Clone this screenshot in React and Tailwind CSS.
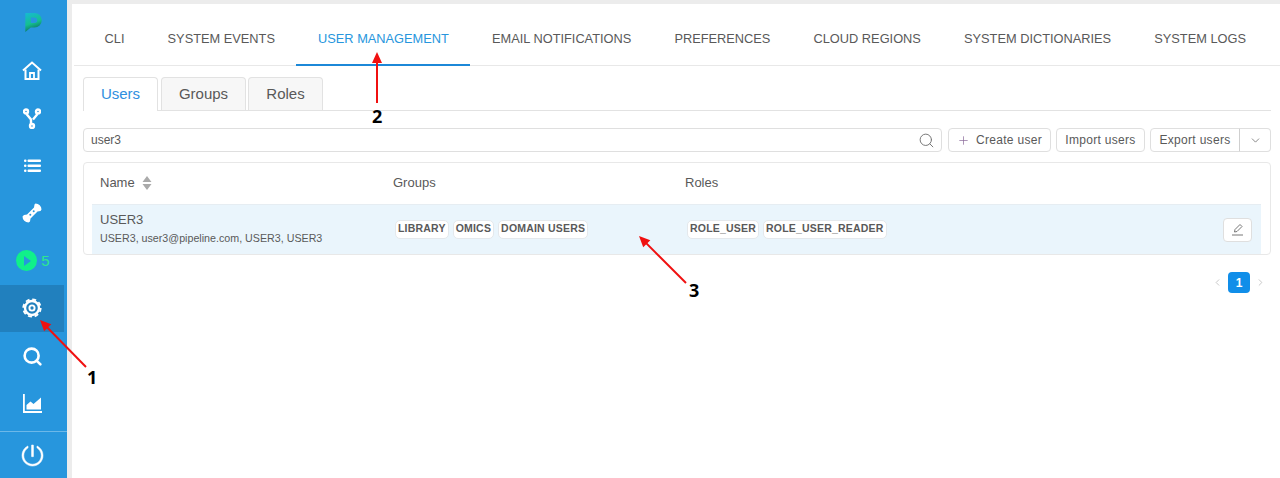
import React from 'react';
import { Search, ChevronDown, ChevronLeft, ChevronRight, Plus } from 'lucide-react';
import { AiOutlinePoweroff } from 'react-icons/ai';

const topTabs = ['CLI', 'SYSTEM EVENTS', 'USER MANAGEMENT', 'EMAIL NOTIFICATIONS', 'PREFERENCES', 'CLOUD REGIONS', 'SYSTEM DICTIONARIES', 'SYSTEM LOGS'];

function Tag({ children }) {
  return (
    <span className="h-[19px] px-[2px] flex items-center bg-white border border-[#e4e8ec] rounded-[5px] text-[10.5px] font-bold text-[#595959] tracking-[0.2px] whitespace-nowrap">
      {children}
    </span>
  );
}

function Logo() {
  return (
    <svg width="18" height="21" viewBox="0 0 19 23">
      <defs>
        <linearGradient id="logoGrad" x1="0" y1="0" x2="0.3" y2="1">
          <stop offset="0" stopColor="#17b9d6" />
          <stop offset="0.6" stopColor="#14c08f" />
          <stop offset="1" stopColor="#0d6f63" />
        </linearGradient>
      </defs>
      <path fillRule="evenodd" fill="url(#logoGrad)" d="M0 1h10a8 8 0 0 1 0 16H6l-6 5zM6 6v6h4a3 3 0 0 0 0-6z" />
    </svg>
  );
}

function HomeIcon() {
  return (
    <svg width="20" height="20" viewBox="0 0 20 20" fill="none" stroke="white" strokeWidth="2">
      <path d="M1 9.500L10 1.500l9 8" />
      <path d="M3.500 8.500V18h13V8.500" />
      <path d="M8 18v-6h4v6" strokeWidth="1.800" />
    </svg>
  );
}

function ForkIcon() {
  return (
    <svg width="18" height="21" viewBox="0 0 18 21" fill="none" stroke="white" strokeWidth="2.400">
      <circle cx="3" cy="3.500" r="2" />
      <circle cx="15" cy="3.500" r="2" />
      <circle cx="9" cy="18" r="2" />
      <path d="M3.500 6l4.500 5.500V16M14.500 6L10 11.500" />
    </svg>
  );
}

function ListIcon() {
  return (
    <svg width="17" height="14" viewBox="0 0 17 14" fill="white">
      <rect x="0" y="0.500" width="2.500" height="2.500" rx="1" />
      <rect x="0" y="5.500" width="2.500" height="2.500" rx="1" />
      <rect x="0" y="10.500" width="2.500" height="2.500" rx="1" />
      <rect x="3.500" y="0.500" width="13.500" height="2.500" rx="1" />
      <rect x="3.500" y="5.500" width="13.500" height="2.500" rx="1" />
      <rect x="3.500" y="10.500" width="13.500" height="2.500" rx="1" />
    </svg>
  );
}

function ToolIcon() {
  return (
    <svg width="20" height="20" viewBox="0 0 20 20" fill="white">
      <path d="M13.500 0.500a6 6 0 0 1 6 6l-1 1.500-3 .5-3.500 3.500-3.500 3.500-.5 3-1.500 1a6 6 0 0 1-6-6l1.500-1.500 3-.5L12 4.500l.5-3z" />
      <circle cx="8.300" cy="11.700" r="1" fill="#2796dd" />
      <circle cx="11.700" cy="8.300" r="1" fill="#2796dd" />
    </svg>
  );
}

function GearIcon() {
  return (
    <svg width="20" height="20" viewBox="0 0 20 20" fill="none" stroke="white">
      <circle cx="10" cy="10" r="7" strokeWidth="2.400" />
      <circle cx="10" cy="10" r="8.700" strokeWidth="1.800" strokeDasharray="4 2.830" />
      <circle cx="10" cy="10" r="2.600" strokeWidth="1.900" />
    </svg>
  );
}

function ChartIcon() {
  return (
    <svg width="19" height="19" viewBox="0 0 19 19" fill="white">
      <path d="M0 0h1.800v17H19v2H0z" />
      <path d="M3.500 15.500v-4.500l4-3.500 3 2.500 3.500-3 4-3.500v12z" />
    </svg>
  );
}

function SideItem({ children, active }) {
  return (
    <div className={`h-[47.5px] w-[64px] flex items-center justify-center ${active ? 'bg-[#2180be]' : ''}`}>
      {children}
    </div>
  );
}

function Sidebar() {
  return (
    <aside className="w-[67px] h-[478px] shrink-0 bg-[#2796dd] flex flex-col">
      <div className="h-[47px] w-[64px] flex items-center justify-center pb-[2px] pl-[3px]">
        <Logo />
      </div>
      <SideItem><HomeIcon /></SideItem>
      <SideItem><ForkIcon /></SideItem>
      <SideItem><ListIcon /></SideItem>
      <SideItem><ToolIcon /></SideItem>
      <SideItem>
        <span className="flex items-center gap-[4px] pl-[2px]">
          <span className="w-[21px] h-[21px] rounded-full bg-[#10f08a] flex items-center justify-center">
            <svg width="8" height="10" viewBox="0 0 8 10"><path d="M1 0l7 5-7 5z" fill="#2796dd" /></svg>
          </span>
          <span className="text-[15px] text-[#2ee88f]">5</span>
        </span>
      </SideItem>
      <SideItem active><GearIcon /></SideItem>
      <SideItem><Search size={21} color="white" strokeWidth={3} className="mt-[2px]" /></SideItem>
      <SideItem><ChartIcon /></SideItem>
      <div className="mt-[4px] border-t border-[#6cb8e8] flex-1 flex items-center justify-center pr-[2px]">
        <AiOutlinePoweroff size={25} color="white" stroke="white" strokeWidth={20} />
      </div>
    </aside>
  );
}

function TopTabs() {
  return (
    <div className="h-[62px] ml-[2px] flex pl-[9px] border-b border-[#e8e8e8]">
      {topTabs.map((t) => (
        <div
          key={t}
          className={`h-[62px] px-[21.55px] flex items-center whitespace-nowrap text-[12.8px] pt-[10px] border-b-2 ${t === 'USER MANAGEMENT' ? 'text-[#2796dd] border-[#1c88d8]' : 'text-[#595959] border-transparent'}`}
        >
          {t}
        </div>
      ))}
    </div>
  );
}

function SubTabs() {
  return (
    <div className="mt-[11px] ml-[11px] mr-[9px] h-[34px] flex border-b border-[#e2e2e2]">
      <div className="w-[75px] h-[34px] mr-[3px] flex items-center justify-center bg-white border border-b-0 border-[#e2e2e2] rounded-t-[4px] text-[15px] text-[#2f8fe0]">Users</div>
      <div className="w-[85px] h-[33px] mr-[2px] flex items-center justify-center bg-[#f7f7f7] border border-b-0 border-[#e2e2e2] rounded-t-[4px] text-[15px] text-[#595959]">Groups</div>
      <div className="w-[75px] h-[33px] flex items-center justify-center bg-[#f7f7f7] border border-b-0 border-[#e2e2e2] rounded-t-[4px] text-[15px] text-[#595959]">Roles</div>
    </div>
  );
}

function Toolbar() {
  const btn = 'h-[24px] flex items-center justify-center bg-white border border-[#dfdfdf] text-[12px] tracking-[0.3px] text-[#595959]';
  return (
    <div className="mt-[17px] ml-[11px] mr-[9px] flex">
      <div className="w-[859px] h-[24px] flex items-center justify-between border border-[#dfdfdf] rounded-[4px] pl-[7px] pr-[6px] text-[12px] text-[#595959]">
        <span>user3</span>
        <Search size={17} color="#777" strokeWidth={1.4} />
      </div>
      <div className={`${btn} ml-[6px] w-[103px] rounded-[4px] gap-[6px]`}>
        <Plus size={13} color="#8a6a9a" strokeWidth={1.3} />
        <span>Create user</span>
      </div>
      <div className={`${btn} ml-[5px] w-[89px] rounded-[4px]`}>Import users</div>
      <div className={`${btn} ml-[5px] w-[90px] rounded-l-[4px]`}>Export users</div>
      <div className={`${btn} w-[32px] border-l-[#cfcfcf] -ml-[1px] rounded-r-[4px]`}>
        <ChevronDown size={13} color="#666" strokeWidth={1.4} />
      </div>
    </div>
  );
}

function UserTable() {
  return (
    <div className="mt-[10px] ml-[11px] mr-[9px] h-[93px] border border-[#e8e8e8] rounded-[4px] pl-[8px] pr-[9px] text-[#595959]">
      <div className="h-[41px] flex items-center text-[13px] pl-[8px] pb-[1px]">
        <div className="w-[293px] flex items-center gap-[7px]">
          Name
          <svg width="10" height="14" viewBox="0 0 10 14" fill="#aaa">
            <path d="M5 0l4.500 6h-9zM5 14l-4.500-6h9z" />
          </svg>
        </div>
        <div className="w-[292px]">Groups</div>
        <div>Roles</div>
      </div>
      <div className="h-[50px] bg-[#eaf5fc] border-t border-[#e6edf2] flex items-center pl-[8px] pr-[9px]">
        <div className="w-[295px] pb-[1px]">
          <div className="text-[13px] leading-[16px] -mt-[1px]">USER3</div>
          <div className="text-[10.7px] leading-[14px] mt-[3px] whitespace-nowrap">USER3, user3@pipeline.com, USER3, USER3</div>
        </div>
        <div className="w-[292px] flex gap-[4px] pb-[1px]">
          <Tag>LIBRARY</Tag>
          <Tag>OMICS</Tag>
          <Tag>DOMAIN USERS</Tag>
        </div>
        <div className="flex-1 flex gap-[4px] pb-[1px]">
          <Tag>ROLE_USER</Tag>
          <Tag>ROLE_USER_READER</Tag>
        </div>
        <div className="w-[29px] h-[24px] bg-white border border-[#dfdfdf] rounded-[4px] flex items-center justify-center">
          <svg width="13" height="13" viewBox="0 0 13 13" fill="none" stroke="#777" strokeWidth="1">
            <path d="M3.500 9l.5-2.500 5-5 2 2-5 5zM1 12h11" />
          </svg>
        </div>
      </div>
    </div>
  );
}

function Pagination() {
  return (
    <div className="mt-[17px] mr-[14px] flex justify-end items-center gap-[5px]">
      <ChevronLeft size={11} color="#c4c4c4" />
      <div className="w-[22px] h-[21px] rounded-[4px] bg-[#108ee9] text-white text-[12px] font-bold flex items-center justify-center">1</div>
      <ChevronRight size={11} color="#c4c4c4" />
    </div>
  );
}

function Arrow({ x1, y1, x2, y2 }) {
  const w = Math.abs(x2 - x1) + 14;
  const h = Math.abs(y2 - y1) + 14;
  const left = Math.min(x1, x2) - 7;
  const top = Math.min(y1, y2) - 7;
  const a = Math.atan2(y2 - y1, x2 - x1);
  const ax = x2 - left;
  const ay = y2 - top;
  const sx = x1 - left;
  const sy = y1 - top;
  const p = (d, s) => `${ax - Math.cos(a) * d - Math.sin(a) * s},${ay - Math.sin(a) * d + Math.cos(a) * s}`;
  return (
    <svg className="absolute" style={{ left, top }} width={w} height={h}>
      <line x1={sx} y1={sy} x2={ax - Math.cos(a) * 8} y2={ay - Math.sin(a) * 8} stroke="#f01010" strokeWidth="2" />
      <polygon points={`${ax},${ay} ${p(11, 5)} ${p(11, -5)}`} fill="#f01010" />
    </svg>
  );
}

function Label({ children, cls }) {
  return <span className={`absolute text-[18px] leading-[20px] font-bold text-black font-['Open_Sans',sans-serif] ${cls}`}>{children}</span>;
}

export default function App() {
  return (
    <div className="relative w-[1280px] h-[478px] overflow-hidden bg-[#ececec] flex font-['Liberation_Sans',Arial,sans-serif]">
      <Sidebar />
      <main className="ml-[5px] mt-[4px] w-[1208px] min-w-0 h-[474px] bg-white">
        <TopTabs />
        <SubTabs />
        <Toolbar />
        <UserTable />
        <Pagination />
      </main>

      <Arrow x1={86} y1={367} x2={40} y2={320} />
      <Label cls="left-[87px] top-[367px]">1</Label>
      <Arrow x1={377} y1={103} x2={377} y2={52} />
      <Label cls="left-[372px] top-[106px]">2</Label>
      <Arrow x1={686} y1={283} x2={639} y2={236} />
      <Label cls="left-[689px] top-[280px]">3</Label>
    </div>
  );
}
